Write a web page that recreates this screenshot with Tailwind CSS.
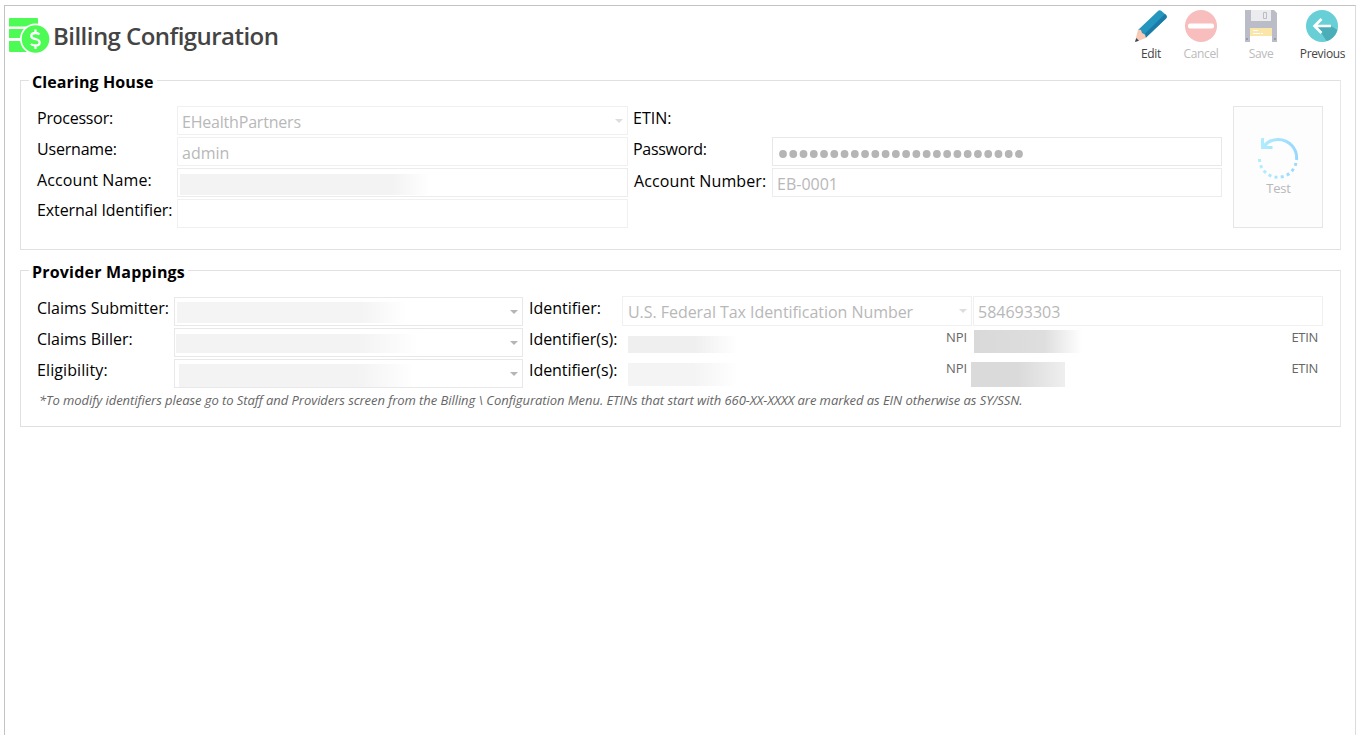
<!DOCTYPE html>
<html lang="en">
<head>
  <meta charset="UTF-8">
  <meta name="viewport" content="width=device-width, initial-scale=1.0">
  <title>Billing Configuration</title>
  <script src="https://cdn.jsdelivr.net/npm/@tailwindcss/browser@4"></script>
</head>

<body class="bg-white font-['Segoe_UI','Open_Sans',sans-serif] text-black overflow-hidden">

  <div class="ml-1 mt-[5px] w-[1352px] h-[730px] border-l border-t border-r border-[#c3c3c3] border-r-[#dcdcdc]">

    <!-- Header -->
    <header class="flex justify-between h-[74px]">
      <div class="flex items-start pl-1">
        <svg class="mt-3 w-[41px] h-[36px]" viewBox="0 0 41 36">
          <path fill="#4cfb54" d="M1 0H28Q29 0 29 1V8.500H0V1Q0 0 1 0ZM0 11H17Q14 15 13 20H0ZM0 23H13Q14 29 18 34H1Q0 34 0 33Z"/>
          <circle cx="26.500" cy="21" r="15.500" fill="#fff"/>
          <circle cx="26.500" cy="21" r="13.800" fill="#4cfb54"/>
          <path fill="none" stroke="#fff" stroke-width="2.300" d="M30.500 16.500Q29 15 26.500 15Q22.300 15 22.300 17.900Q22.300 20.200 26.300 21Q30.700 22 30.700 24.500Q30.700 27.500 26.500 27.500Q23.500 27.500 21.800 26M26.500 11.500V15M26.500 27.500V31"/>
        </svg>
        <h1 class="ml-[3px] mt-3.5 text-[24px] leading-8 font-semibold text-[#444] tracking-[-0.54px] whitespace-nowrap">Billing Configuration</h1>
      </div>

      <!-- Toolbar -->
      <div class="flex pt-1 pr-2 text-xs leading-4 text-[#444] tracking-[-0.35px]">
        <button class="w-[49px] flex flex-col items-center">
          <svg class="w-8 h-8" viewBox="0 0 32 32">
            <path fill="#2596be" d="M22.500 1.500Q24.500-.5 26.500 1L31 5Q32.500 6.500 31 8.500L10.500 28L3 20Z"/>
            <path fill="#1c7ba6" d="M30 4L31 5Q32.500 6.500 31 8.500L10.500 28L8 25.500Z"/>
            <path fill="#f8c9b4" d="M3 19.500L6 20L7 23L10 24.500L11 28L0 32Z"/>
            <path fill="#35495e" d="M1.300 28L4 30.700L0 32Z"/>
          </svg>
          <span class="mt-1 ml-px">Edit</span>
        </button>
        <button class="w-[51px] flex flex-col items-center text-[#bbb]">
          <svg class="w-8 h-8" viewBox="0 0 32 32">
            <circle cx="16" cy="16" r="16" fill="#f8bdbd"/>
            <rect x="3" y="13.500" width="26" height="5" rx="2" fill="#fff"/>
          </svg>
          <span class="mt-1 ml-px">Cancel</span>
        </button>
        <button class="ml-[11px] w-[48px] flex flex-col items-center text-[#bbb]">
          <svg class="w-8 h-8" viewBox="0 0 32 32">
            <path fill="#babdc8" d="M0 0H29L32 3V32H0Z"/>
            <path fill="#ececee" d="M6 0H26V11H6Z"/>
            <path fill="none" stroke="#babdc8" d="M18.500 2.500H21.500V8.500H18.500Z"/>
            <path fill="#fff" d="M5 18H27V32H5Z"/>
            <path fill="#fae6a8" d="M5 18H27V26H5Z"/>
            <path stroke="#fff" d="M8 20.500H13M8 23.500H15M16 23.500H18"/>
            <path fill="#999ca8" d="M1 28H3V30H1ZM29 28H31V30H29Z"/>
          </svg>
          <span class="mt-1">Save</span>
        </button>
        <button class="ml-3 w-[50px] flex flex-col items-center">
          <svg class="w-8 h-8" viewBox="0 0 32 32">
            <circle cx="16" cy="16" r="16" fill="#69cfd6"/>
            <path fill="#4badb8" d="M16 24L8 16H25L31.500 20Q28.500 29 20.500 31Z"/>
            <path fill="none" stroke="#fff" stroke-width="2.600" d="M25 16H9M15.500 9L8.500 16L15.500 23"/>
          </svg>
          <span class="mt-1 ml-px">Previous</span>
        </button>
      </div>
    </header>

    <!-- Clearing House -->
    <fieldset class="ml-[15px] w-[1321px] h-[170px] relative border border-[#e0e0e0] border-r-[#e8e8e8]">
      <h2 class="absolute left-2 -top-[11px] bg-white px-[3px] text-base leading-6 font-bold tracking-[0.1px] whitespace-nowrap">Clearing House</h2>
      <div class="flex pt-[25px] pl-4">
        <div class="grid grid-cols-[140px_451px] gap-y-0.5 auto-rows-[29px] text-base leading-[25px] whitespace-nowrap">
          <label class="tracking-[-0.2px]">Processor:</label>
          <div class="flex items-center justify-between border border-[#f0f0f0] pl-1 pr-1 text-[#b8b8b8]">
            <span class="mt-[3px] tracking-[-0.2px]">EHealthPartners</span>
            <svg class="w-2 h-1" viewBox="0 0 8 4"><path fill="#ddd" d="M0 0H8L4 4Z"/></svg>
          </div>
          <label class="tracking-[-0.2px]">Username:</label>
          <div class="flex items-center border border-[#f0f0f0] pl-1 pt-[3px] text-[#b8b8b8]">admin</div>
          <label class="tracking-[0.1px]">Account Name:</label>
          <div class="flex items-center border border-[#ececec] pl-0.5">
            <div class="mt-1 w-[250px] h-[21px] bg-linear-to-r from-[#f3f3f3] from-85% to-white"></div>
          </div>
          <label class="-mt-px tracking-[-0.1px]">External Identifier:</label>
          <div class="border border-[#f0f0f0]"></div>
        </div>

        <div class="ml-[5px] grid grid-cols-[139px_450px] gap-y-0.5 auto-rows-[29px] text-base leading-[25px] whitespace-nowrap">
          <label>ETIN:</label>
          <div></div>
          <label class="tracking-[-0.3px]">Password:</label>
          <div class="flex items-center border border-[#e8e8e8] pl-1.5 pt-[5px]">
            <svg class="w-[246px] h-2" viewBox="0 0 246 8">
              <path stroke="#b5b5b5" stroke-width="7.800" stroke-linecap="round" stroke-dasharray="0 10.260" d="M4 4H241"/>
            </svg>
          </div>
          <label class="ml-px mt-px tracking-[0.1px]">Account Number:</label>
          <div class="flex items-center border border-[#ececec] pl-1 pt-[3px] text-[#b8b8b8]">EB-0001</div>
        </div>

        <button class="ml-[11px] w-[90px] h-[122px] border border-[#e6e6e6] bg-[#fdfdfd] flex flex-col items-center pt-[30px] text-[13px] leading-[18px] text-[#b8b8b8]">
          <svg class="w-[42px] h-[42px]" viewBox="0 0 42 42">
            <defs>
              <linearGradient id="testGradient" gradientUnits="userSpaceOnUse" x1="0" y1="0" x2="42" y2="0">
                <stop stop-color="#b5effd"/>
                <stop offset="1" stop-color="#96d7ff"/>
              </linearGradient>
            </defs>
            <g fill="none" stroke="url(#testGradient)" stroke-width="3">
              <path d="M6 10Q12 2.500 21 2.500A18.500 18.500 0 0 1 39.500 23"/>
              <path d="M5.500 1V10.500H15.500M5.500 10.500L10.500 6"/>
              <path stroke-dasharray="3 3.300" d="M39 26A18.500 18.500 0 0 1 2.500 21"/>
            </g>
          </svg>
          <span class="ml-px tracking-[-0.2px]">Test</span>
        </button>
      </div>
    </fieldset>

    <!-- Provider Mappings -->
    <fieldset class="ml-[15px] mt-5 w-[1321px] h-[157px] relative border border-[#e0e0e0] border-r-[#e8e8e8]">
      <h2 class="absolute left-2 -top-[11px] bg-white px-[3px] text-base leading-6 font-bold tracking-[0.2px] whitespace-nowrap">Provider Mappings</h2>
      <div class="flex pt-[26px] pl-4">
        <div class="grid grid-cols-[137px_349px] gap-y-0.5 auto-rows-[29px] text-base leading-[25px] whitespace-nowrap">
          <label class="-mt-px">Claims Submitter:</label>
          <div class="flex items-center justify-between border border-[#e8e8e8] pl-0.5 pr-1">
            <div class="mt-px w-[230px] h-[21px] bg-linear-to-r from-[#f4f4f4] from-80% to-white"></div>
            <svg class="w-2 h-1" viewBox="0 0 8 4"><path fill="#b5b5b5" d="M0 0H8L4 4Z"/></svg>
          </div>
          <label class="-mt-px">Claims Biller:</label>
          <div class="flex items-center justify-between border border-[#e8e8e8] pl-px pr-1">
            <div class="mt-0.5 w-[242px] h-[19px] bg-linear-to-r from-[#f3f3f3] from-75% to-white"></div>
            <svg class="w-2 h-1" viewBox="0 0 8 4"><path fill="#b5b5b5" d="M0 0H8L4 4Z"/></svg>
          </div>
          <label class="-mt-px tracking-[0.1px]">Eligibility:</label>
          <div class="flex items-center justify-between border border-[#e8e8e8] pl-1 pr-1">
            <div class="mt-1 w-[236px] h-[23px] bg-linear-to-r from-[#f3f3f3] from-75% to-white"></div>
            <svg class="w-2 h-1" viewBox="0 0 8 4"><path fill="#b5b5b5" d="M0 0H8L4 4Z"/></svg>
          </div>
        </div>

        <div class="-mt-px ml-[5px] grid grid-cols-[93px_350px_350px] gap-x-px gap-y-0.5 auto-rows-[29px] text-base leading-[25px] whitespace-nowrap">
          <label class="ml-px">Identifier:</label>
          <div class="flex items-center justify-between border border-[#f0f0f0] pl-[5px] pr-1 h-[30px] text-[#b8b8b8]">
            <span class="mt-0.5 tracking-[-0.05px]">U.S. Federal Tax Identification Number</span>
            <svg class="w-2 h-1" viewBox="0 0 8 4"><path fill="#ddd" d="M0 0H8L4 4Z"/></svg>
          </div>
          <div class="flex items-center border border-[#f0f0f0] pl-1 pt-0.5 h-[30px] text-[#b8b8b8]">584693303</div>

          <label class="ml-px tracking-[-0.05px]">Identifier(s):</label>
          <div class="flex items-start justify-between pl-1.5 pr-[5px] text-[13px] leading-[21px] text-[#666]">
            <div class="mt-[9px] w-[110px] h-[17px] bg-linear-to-r from-[#efefef] from-60% to-white"></div>
            <span class="tracking-[-0.1px]">NPI</span>
          </div>
          <div class="flex items-start justify-between pl-px pr-[5px] text-[13px] leading-[21px] text-[#666]">
            <div class="mt-[3px] w-[108px] h-[23px] bg-linear-to-r from-[#d9d9d9] via-[#dedede] via-65% to-white"></div>
            <span class="tracking-[-0.3px]">ETIN</span>
          </div>

          <label class="ml-px tracking-[-0.05px]">Identifier(s):</label>
          <div class="flex items-start justify-between pl-1.5 pr-[5px] text-[13px] leading-[21px] text-[#666]">
            <div class="mt-[5px] w-[110px] h-[23px] bg-linear-to-r from-[#f4f4f4] from-60% to-white"></div>
            <span class="tracking-[-0.1px]">NPI</span>
          </div>
          <div class="flex items-start justify-between pr-[5px] text-[13px] leading-[21px] text-[#666]">
            <div class="-ml-0.5 mt-[4px] w-[94px] h-[25px] bg-linear-to-r from-[#dadada] via-[#dadada] via-50% to-[#efefef]"></div>
            <span class="tracking-[-0.3px]">ETIN</span>
          </div>
        </div>
      </div>
      <p class="ml-[18px] mt-[3px] text-[13px] leading-[18px] italic text-[#666] tracking-[-0.06px] whitespace-nowrap">*To modify identifiers please go to Staff and Providers screen from the Billing \ Configuration Menu. ETINs that start with 660-XX-XXXX are marked as EIN otherwise as SY/SSN.</p>
    </fieldset>

  </div>

</body>
</html>
